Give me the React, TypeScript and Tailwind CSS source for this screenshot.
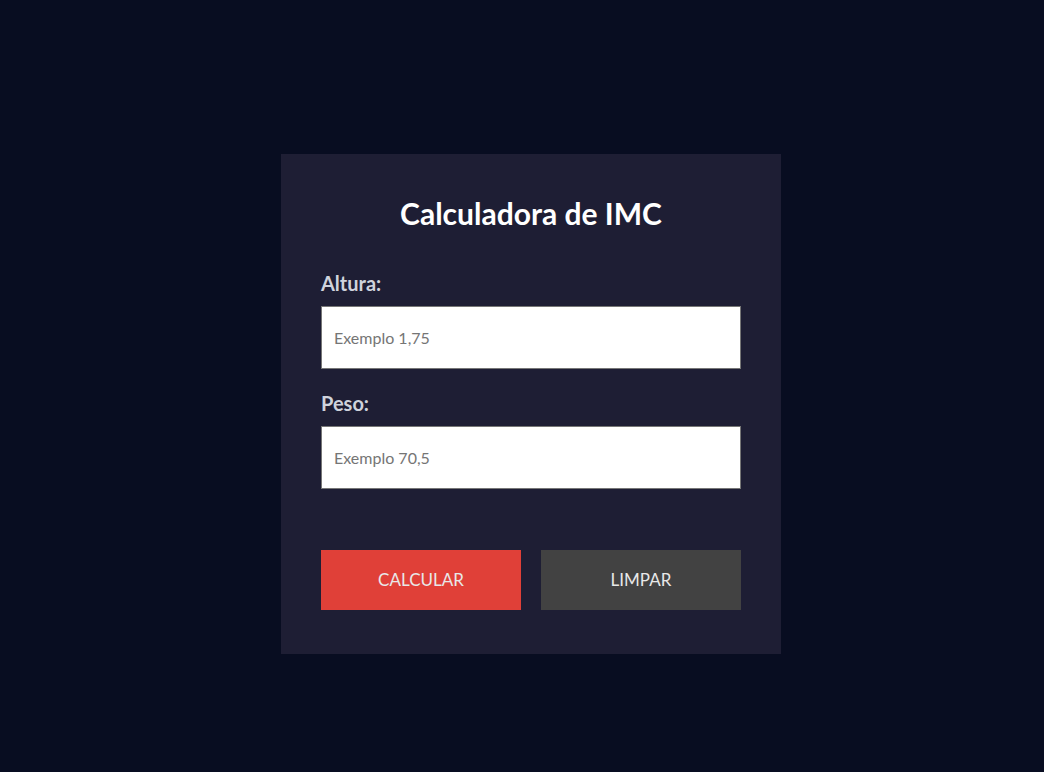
import {useState} from "react";

export default function App() {
    const [altura, setAltura] = useState("");
    const [peso, setPeso] = useState("");

    return (
        <div className="min-h-screen w-full bg-[#080d21] flex items-center justify-center pl-[18px] pt-[36px] font-['Lato',sans-serif]">
            <div className="w-[500px] h-[500px] bg-[#1e1e34] p-10 flex flex-col">
                <h1 className="text-center text-white font-bold text-[30px] leading-[36px] mt-[1px]">Calculadora de IMC</h1>

                <label className="mt-[40px] text-[20px] font-bold leading-[24px] text-[#cfd3dc]">Altura:</label>
                <input
                    className="mt-[11px] h-[63px] w-full bg-white border border-[#767676] px-3 text-[16px] text-[#333] placeholder:text-[#757575] outline-none"
                    placeholder="Exemplo 1,75"
                    value={altura}
                    onChange={(e) => setAltura(e.target.value)}
                />

                <label className="mt-[22px] text-[20px] font-bold leading-[24px] text-[#cfd3dc]">Peso:</label>
                <input
                    className="mt-[11px] h-[63px] w-full bg-white border border-[#767676] px-3 text-[16px] text-[#333] placeholder:text-[#757575] outline-none"
                    placeholder="Exemplo 70,5"
                    value={peso}
                    onChange={(e) => setPeso(e.target.value)}
                />

                <div className="mt-[61px] flex gap-5">
                    <button className="w-[200px] h-[60px] bg-[#e04038] text-[#e8e8e8] text-[17px] uppercase">
                        Calcular
                    </button>
                    <button
                        className="w-[200px] h-[60px] bg-[#424242] text-[#e8e8e8] text-[17px] uppercase"
                        onClick={() => {
                            setAltura("");
                            setPeso("");
                        }}
                    >
                        Limpar
                    </button>
                </div>
            </div>
        </div>
    );
}
